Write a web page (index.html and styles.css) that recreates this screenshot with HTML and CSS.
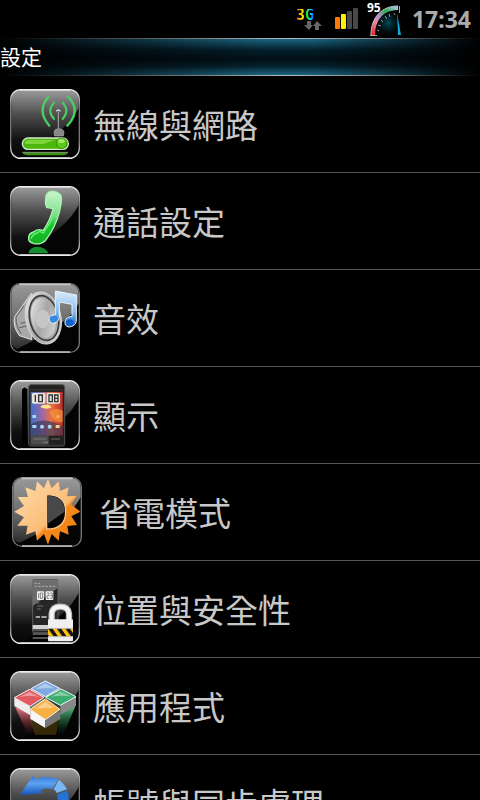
FILE: index.html
```html
<!DOCTYPE html>
<html lang="zh-Hant">
<head>
    <meta charset="UTF-8">
    <meta name="viewport" content="width=device-width, initial-scale=1.0">
    <title>設定</title>
    <link rel="stylesheet" href="styles.css">
</head>
<body>
    <!-- Shared gradients and the glossy tile -->
    <svg class="defs" width="0" height="0" aria-hidden="true">
        <defs>
            <linearGradient id="rim" x1="0" y1="0" x2="0" y2="1">
                <stop offset="0" stop-color="#f4f4f4"/>
                <stop offset=".25" stop-color="#777"/>
                <stop offset=".75" stop-color="#777"/>
                <stop offset="1" stop-color="#f0f0f0"/>
            </linearGradient>
            <linearGradient id="gloss" x1="0" y1="0" x2="0" y2="1">
                <stop offset="0" stop-color="#9a9a9a"/>
                <stop offset=".35" stop-color="#505050"/>
                <stop offset=".75" stop-color="#101010"/>
                <stop offset="1" stop-color="#060606"/>
            </linearGradient>
            <linearGradient id="gray" x1="0" y1="0" x2="0" y2="1">
                <stop offset="0" stop-color="#999"/>
                <stop offset=".5" stop-color="#707070"/>
                <stop offset="1" stop-color="#2c2c2c"/>
            </linearGradient>
            <linearGradient id="green" x1="0" y1="0" x2="0" y2="1">
                <stop offset="0" stop-color="#c9f5cf"/>
                <stop offset=".45" stop-color="#7ee08a"/>
                <stop offset=".65" stop-color="#14c828"/>
                <stop offset="1" stop-color="#12b020"/>
            </linearGradient>
            <linearGradient id="note" x1="0" y1="0" x2="0" y2="1">
                <stop offset="0" stop-color="#dceefc"/>
                <stop offset=".6" stop-color="#7db8ee"/>
                <stop offset="1" stop-color="#0f5fcb"/>
            </linearGradient>
            <linearGradient id="silver" x1="0" y1="0" x2="1" y2="1">
                <stop offset="0" stop-color="#f4f4f4"/>
                <stop offset=".5" stop-color="#a5a5a5"/>
                <stop offset="1" stop-color="#e0e0e0"/>
            </linearGradient>
            <linearGradient id="sun" x1="0" y1="0" x2="1" y2="1">
                <stop offset="0" stop-color="#ffdcae"/>
                <stop offset=".58" stop-color="#fbbd76"/>
                <stop offset=".62" stop-color="#f58a1c"/>
                <stop offset="1" stop-color="#f07d10"/>
            </linearGradient>
            <linearGradient id="screen" x1="0" y1="0" x2="1" y2="0">
                <stop offset="0" stop-color="#3c72c8"/>
                <stop offset=".35" stop-color="#9a68a8"/>
                <stop offset=".65" stop-color="#ec7040"/>
                <stop offset="1" stop-color="#c02c28"/>
            </linearGradient>
            <linearGradient id="arrow" x1="0" y1="0" x2="0" y2="1">
                <stop offset="0" stop-color="#2f78d8"/>
                <stop offset=".4" stop-color="#5ea2f0"/>
                <stop offset="1" stop-color="#1558bc"/>
            </linearGradient>
            <linearGradient id="dial" x1="0" y1="1" x2="1" y2="0">
                <stop offset="0" stop-color="#e8202c"/>
                <stop offset=".3" stop-color="#ee8c96"/>
                <stop offset=".45" stop-color="#c08ad0"/>
                <stop offset=".7" stop-color="#2cae48"/>
                <stop offset="1" stop-color="#a8c8ee"/>
            </linearGradient>
            <radialGradient id="dial-glow">
                <stop offset="0" stop-color="#004c5c"/>
                <stop offset="1" stop-color="#001216" stop-opacity="0"/>
            </radialGradient>
            <linearGradient id="fade-red" x1="0" y1="0" x2="0" y2="1">
                <stop offset="0" stop-color="#f08088"/>
                <stop offset="1" stop-color="#801018" stop-opacity="0"/>
            </linearGradient>
            <linearGradient id="fade-green" x1="0" y1="0" x2="0" y2="1">
                <stop offset="0" stop-color="#58c088"/>
                <stop offset="1" stop-color="#106030" stop-opacity="0"/>
            </linearGradient>
            <pattern id="hazard" width="26" height="26" patternUnits="userSpaceOnUse" patternTransform="skewX(35)">
                <rect width="26" height="26" fill="#151515"/>
                <rect width="13" height="26" fill="#fcc010"/>
            </pattern>
            <symbol id="tile" viewBox="0 0 210 210">
                <rect x="2" y="2" width="206" height="206" rx="30" fill="#040404"/>
                <path d="M4 33Q4 4 34 4H176Q206 4 206 33V56C175 120 105 158 36 204Q4 204 4 174Z" fill="url(#gloss)"/>
                <rect x="2" y="2" width="206" height="206" rx="30" fill="none" stroke="url(#rim)" stroke-width="4"/>
                <path d="M28 3H182M30 207H180" stroke="#e8e8e8" stroke-width="5"/>
            </symbol>
            <symbol id="tile-gray" viewBox="0 0 210 210">
                <rect x="2" y="2" width="206" height="206" rx="28" fill="#040404"/>
                <path d="M4 33Q4 4 34 4H176Q206 4 206 33V60C175 122 105 154 22 198Q4 192 4 174Z" fill="url(#gray)"/>
                <rect x="2" y="2" width="206" height="206" rx="28" fill="none" stroke="#777" stroke-width="4"/>
                <path d="M28 4H182M30 207H180" stroke="#c4c4c4" stroke-width="5"/>
            </symbol>
        </defs>
    </svg>

    <header class="status-bar">
        <div class="network">
            <span class="network-type">3G</span>
            <svg class="network-arrows" viewBox="0 0 18 9" aria-hidden="true">
                <path d="M3 0H7V4H9L5 9L0 4H3ZM11 9V5H9L13 0L18 5H15V9Z" fill="#666"/>
            </svg>
        </div>
        <svg class="signal" viewBox="0 0 24 22" aria-hidden="true">
            <rect x="0" y="9" width="5" height="12" rx="1" fill="#ff7800"/>
            <rect x="6" y="6" width="5" height="15" rx="1" fill="#fff000"/>
            <rect x="12" y="3" width="5" height="18" rx="1" fill="#484848"/>
            <rect x="18" y="0" width="5" height="21" rx="1" fill="#484848"/>
        </svg>
        <div class="battery">
            <svg class="battery-dial" viewBox="0 0 36 36" aria-hidden="true">
                <circle cx="21" cy="22" r="14" fill="url(#dial-glow)"/>
                <path d="M6 34C6 17 16 7 31 7" fill="none" stroke="url(#dial)" stroke-width="4"/>
                <path d="M4 34C4 16 15 5 31 5" fill="none" stroke="#b8c4dc" stroke-width="1"/>
                <path d="M3 34.500H10M32.500 5V12" stroke="#aaa"/>
                <path d="M10 29L12 30M11 24L14 25M14 19L16 21M18 15L20 18M22 13L23 16M27 12L28 14" stroke="#999"/>
                <path d="M30 12L34 34H31Z" fill="#10a8d4"/>
            </svg>
            <span class="battery-level">95</span>
        </div>
        <time class="clock">17:34</time>
    </header>

    <h1 class="title-bar">設定</h1>

    <nav class="settings">
        <a class="item" href="#wireless">
            <svg class="icon" viewBox="30 27 210 210" aria-hidden="true">
                <use href="#tile" x="30" y="27" width="210" height="210"/>
                <g fill="none" stroke="#48d060" stroke-linecap="round">
                    <path d="M162 68Q140 92 162 117M188 68Q210 92 188 117" stroke-width="6"/>
                    <path d="M145 51Q109 92 148 137M205 51Q245 92 202 137" stroke-width="7"/>
                </g>
                <path d="M169 94Q175 86 181 94" fill="none" stroke="#ddd" stroke-width="4"/>
                <path d="M175 96V146" stroke="#aaa" stroke-width="3"/>
                <path d="M162 156Q164 146 175 146Q190 146 192 156L190 168H164Z" fill="#888" stroke="#aaa" stroke-width="2"/>
                <rect x="67" y="174" width="138" height="34" rx="17" fill="#4cb80c" stroke="#d8e8d0" stroke-width="4"/>
                <path d="M82 180H165L130 192H75Q73 184 82 180Z" fill="#7dd43c"/>
                <circle cx="185" cy="190" r="16" fill="#58cc10" stroke="#2a7806" stroke-width="2"/>
                <ellipse cx="184" cy="183" rx="10" ry="6" fill="#a0e868"/>
                <path d="M67 217H204Q203 224 190 226H82Q69 224 67 217Z" fill="#3c9010"/>
                <path d="M67 217H204" stroke="#aaa" stroke-width="2"/>
            </svg>
            <span class="label">無線與網路</span>
        </a>
        <a class="item" href="#call">
            <svg class="icon" viewBox="30 24 210 210" aria-hidden="true">
                <use href="#tile" x="30" y="24" width="210" height="210"/>
                <path d="M86 226Q88 206 112 206Q136 206 145 226Z" fill="#18b03c" opacity=".8"/>
                <path d="M138 54Q141 42 154 40Q168 38 182 50Q187 63 183 78Q176 126 151 166Q141 181 136 188Q122 200 102 197Q84 192 86 180Q85 167 101 162Q111 151 130 157Q151 127 159 92L140 88Q134 75 138 54Z" fill="url(#green)" stroke="#a9f3b2" stroke-width="4"/>
                <path d="M93 182Q99 168 112 165L119 160L130 165Q151 137 163 106" fill="none" stroke="#6bec78" stroke-width="4"/>
            </svg>
            <span class="label">通話設定</span>
        </a>
        <a class="item" href="#sound">
            <svg class="icon" viewBox="30 24 210 210" aria-hidden="true">
                <use href="#tile-gray" x="30" y="24" width="210" height="210"/>
                <path d="M94 55L44 125Q37 153 58 182L95 194Z" fill="#a9a9a9" stroke="#ddd" stroke-width="3"/>
                <path d="M72 92L48 126Q47 154 64 177M62 145L78 141M58 158L80 153" fill="none" stroke="#5a5a5a" stroke-width="3"/>
                <ellipse cx="130" cy="129" rx="53" ry="79" transform="rotate(-12 130 129)" fill="url(#silver)" stroke="#d4d4d4" stroke-width="3"/>
                <ellipse cx="132" cy="129" rx="43" ry="68" transform="rotate(-12 132 129)" fill="#a9a9a9" stroke="#3c3c3c" stroke-width="5"/>
                <ellipse cx="130" cy="129" rx="36" ry="60" transform="rotate(-12 130 129)" fill="url(#silver)"/>
                <ellipse cx="128" cy="132" rx="21" ry="28" fill="#c6c6c6"/>
                <path d="M166 48L229 60V139Q226 154 207 156Q193 154 195 139Q199 125 216 124V88L178 81V130Q174 143 160 145Q146 143 148 130Q151 119 166 119Z" fill="url(#note)" stroke="#e6f3ff" stroke-width="3"/>
                <ellipse cx="161" cy="131" rx="12" ry="9" fill="#3888de"/>
                <ellipse cx="209" cy="142" rx="11" ry="9" fill="#1460cc"/>
            </svg>
            <span class="label">音效</span>
        </a>
        <a class="item" href="#display">
            <svg class="icon" viewBox="30 24 210 210" aria-hidden="true">
                <use href="#tile" x="30" y="24" width="210" height="210"/>
                <path d="M66 52Q74 40 82 52V215H66Z" fill="#000"/>
                <path d="M66 50L74 44L82 50" fill="none" stroke="#aaa" stroke-width="2"/>
                <rect x="86" y="38" width="108" height="184" rx="7" fill="#222" stroke="#555" stroke-width="3"/>
                <rect x="92" y="52" width="96" height="138" fill="url(#screen)"/>
                <path d="M92 52H188V60H92Z" fill="#282828"/>
                <path d="M92 156Q138 132 188 164V190H92Z" fill="#34385a" opacity=".65"/>
                <path d="M148 120Q170 104 188 116V150Q162 155 148 120Z" fill="#f39a38" opacity=".7"/>
                <rect x="96" y="63" width="40" height="32" rx="4" fill="#e4e4dc"/>
                <rect x="140" y="63" width="40" height="32" rx="4" fill="#e4e4dc"/>
                <path d="M106 69V89M116 69H127V89H116ZM147 69H157V89H147ZM164 69H174V89H164ZM164 79H174" fill="none" stroke="#333" stroke-width="4"/>
                <path d="M122 103Q130 96 137 99Q145 94 155 106Q140 114 122 106Z" fill="#ffe48a"/>
                <g fill="#a8d8f4">
                    <rect x="97" y="129" width="11" height="9"/>
                    <rect x="97" y="159" width="12" height="9"/>
                    <circle cx="126" cy="164" r="6"/>
                    <circle cx="149" cy="164" r="6"/>
                    <rect x="167" y="159" width="12" height="9" fill="#f8d080"/>
                    <rect x="169" y="130" width="10" height="8" fill="#f9a868"/>
                </g>
                <path d="M92 190H146V218H92Z" fill="#4e4e4e"/>
                <path d="M100 201H138M153 201H180M130 211H144" stroke="#999" stroke-width="2"/>
            </svg>
            <span class="label">顯示</span>
        </a>
        <a class="item item-wide" href="#power">
            <svg class="icon" viewBox="37 24 210 210" aria-hidden="true">
                <use href="#tile-gray" x="37" y="24" width="210" height="210"/>
                <path d="M145 30L156 58L177 37L181 66L207 55L202 82L232 80L214 106L242 128L215 142L232 168L203 171L207 197L181 187L177 215L156 195L145 227L133 195L112 215L107 187L79 197L84 170L53 170L73 145L44 128L73 111L54 84L85 84L77 55L107 66L112 37L133 58Z" fill="url(#sun)"/>
                <path d="M141 77Q198 77 198 128Q198 180 141 180Z" fill="#050505" stroke="#f9c68d" stroke-width="4"/>
                <path d="M144 80Q195 80 195 128L144 164Z" fill="#484848"/>
            </svg>
            <span class="label">省電模式</span>
        </a>
        <a class="item" href="#security">
            <svg class="icon" viewBox="30 24 210 210" aria-hidden="true">
                <use href="#tile" x="30" y="24" width="210" height="210"/>
                <rect x="98" y="40" width="76" height="160" rx="3" fill="#262626" stroke="#777" stroke-width="2"/>
                <path d="M98 42H174V66L98 120Z" fill="#6d6d6d"/>
                <path d="M103 61H169M103 52H120" stroke="#aaa" stroke-width="3" stroke-dasharray="8 3"/>
                <rect x="111" y="76" width="21" height="26" rx="2" fill="#f0f0f0"/>
                <rect x="137" y="76" width="23" height="26" rx="2" fill="#f0f0f0"/>
                <path d="M116 81V97M121 81H128V97H121ZM141 81H147V89H141V97H147M151 81H157V97H151M151 89H157" fill="none" stroke="#555" stroke-width="2"/>
                <path d="M111 111H118M111 120H130M111 129H122" stroke="#999" stroke-width="2"/>
                <path d="M107 153H120M124 153H140" stroke="#ccc" stroke-width="5"/>
                <rect x="98" y="177" width="50" height="16" fill="#d2d2d2"/>
                <path d="M98 192H148M98 204H148M98 216H148" stroke="#555" stroke-width="6"/>
                <path d="M155 166V143Q157 122 181 122Q205 122 207 143V166" fill="none" stroke="#bbb" stroke-width="19"/>
                <path d="M155 166V143Q157 122 181 122Q205 122 207 143V166" fill="none" stroke="#f5f5f5" stroke-width="12"/>
                <rect x="144" y="160" width="75" height="66" rx="3" fill="#f0f0f0"/>
                <rect x="144" y="188" width="75" height="23" fill="url(#hazard)"/>
                <path d="M144 187H219M144 212H219" stroke="#aaa" stroke-width="2"/>
            </svg>
            <span class="label">位置與安全性</span>
        </a>
        <a class="item" href="#apps">
            <svg class="icon" viewBox="30 24 210 210" aria-hidden="true">
                <use href="#tile" x="30" y="24" width="210" height="210"/>
                <path d="M45 131L91 151L103 215H84Z" fill="url(#fade-red)"/>
                <path d="M226 130L180 151L172 215H190Z" fill="url(#fade-green)"/>
                <path d="M91 170L135 194L180 160L168 215H105Z" fill="#7c6010" opacity=".4"/>
                <path d="M43 104L91 131V157L43 129Z" fill="#eee"/>
                <path d="M91 131L130 105V135L91 157Z" fill="#777"/>
                <path d="M228 101L181 126V155L228 129Z" fill="#888"/>
                <path d="M91 140L136 169V195L91 168Z" fill="#f6f6f6"/>
                <path d="M136 169L181 142V168L136 195Z" fill="#777"/>
                <path d="M136 54L179 76L136 101L93 77Z" fill="#7fa8e0" stroke="#f4f8ff" stroke-width="3"/>
                <path d="M89 79L132 103L90 130L43 104Z" fill="#e05860" stroke="#fff0f0" stroke-width="3"/>
                <path d="M183 78L228 101L181 127L137 103Z" fill="#3cac70" stroke="#e8fff0" stroke-width="3"/>
                <path d="M136 108L180 139L136 170L91 139Z" fill="#f8b040" stroke="#fff6dc" stroke-width="3"/>
                <path d="M136 61L162 76Q130 75 107 77ZM88 86L118 102Q86 96 58 103ZM182 85L212 100Q177 95 153 102ZM136 116L163 136Q132 131 104 139Z" fill="#fff" opacity=".4"/>
            </svg>
            <span class="label">應用程式</span>
        </a>
        <a class="item" href="#accounts">
            <svg class="icon" viewBox="30 84 210 210" aria-hidden="true">
                <use href="#tile" x="30" y="84" width="210" height="210"/>
                <path d="M60 164L98 108L107 118Q139 104 174 118L157 148Q137 140 122 150L127 160Z" fill="url(#arrow)"/>
                <path d="M177 119Q191 129 201 148L170 159Q168 152 161 148Z" fill="#78b8f4"/>
                <path d="M171 163L203 152Q212 184 195 216L166 202Q176 180 171 163Z" fill="#2474d8"/>
                <path d="M210 224L172 280L163 270Q120 280 96 268L113 240Q133 248 148 238L143 228Z" fill="url(#arrow)"/>
            </svg>
            <span class="label">帳號與同步處理</span>
        </a>
    </nav>
</body>
</html>
```

FILE: styles.css
```css
* {
    box-sizing: border-box;
}

body {
    display: flex;
    flex-direction: column;
    height: 100vh;
    margin: 0;
    background: #000;
    color: #c8c8c8;
    font-family: "Noto Sans", "Noto Sans CJK TC", sans-serif;
}

.defs {
    position: absolute;
}

/* Status bar */
.status-bar {
    display: flex;
    flex: none;
    align-items: center;
    justify-content: flex-end;
    height: 38px;
    padding-right: 9px;
}

.network {
    display: flex;
    flex-direction: column;
    width: 26px;
    margin-right: 13px;
}

.network-type {
    align-self: flex-start;
    font: bold 15px/12px "DejaVu Sans Mono", monospace;
    color: transparent;
    background: linear-gradient(to right, #ff3c00, #ffe800 35%, #20e020 60%, #00d8ff 80%, #2040ff);
    -webkit-background-clip: text;
    background-clip: text;
}

.network-arrows {
    align-self: flex-end;
    width: 18px;
    height: 9px;
}

.signal {
    width: 24px;
    height: 22px;
    margin-right: 8px;
}

.battery {
    position: relative;
    width: 36px;
    height: 36px;
    margin-right: 9px;
}

.battery-dial {
    display: block;
    width: 36px;
    height: 36px;
}

.battery-level {
    position: absolute;
    top: 0;
    left: 0;
    font-size: 12px;
    line-height: 14px;
    font-weight: bold;
    color: #fff;
}

.clock {
    font-size: 23px;
    line-height: 36px;
    font-weight: bold;
    color: #aaa;
}

/* Title bar */
.title-bar {
    flex: none;
    height: 38px;
    margin: 0;
    border-top: 1px solid;
    border-bottom: 1px solid;
    border-image: linear-gradient(to right, #000, #888 45%, #bbb 60%, #777 80%, #000) 1;
    background:
        linear-gradient(to right, #000, transparent 55%, transparent 65%, #000),
        linear-gradient(to bottom, #1b6580, #04202c 30%, #020f16 55%, #04202c 75%, #1b6580);
    color: #fff;
    font-size: 21px;
    line-height: 36px;
    font-weight: normal;
}

/* Settings list */
.settings {
    flex: 1;
    min-height: 0;
    overflow-y: auto;
    scrollbar-width: none;
}

.item {
    display: flex;
    align-items: center;
    gap: 13px;
    height: 97px;
    padding-left: 10px;
    border-bottom: 1px solid #555;
    color: inherit;
    text-decoration: none;
}

.item-wide {
    gap: 17px;
    padding-left: 12px;
}

.icon {
    flex: none;
    width: 70px;
    height: 70px;
}

.label {
    padding-top: 4px;
    font-size: 33px;
    line-height: 48px;
    white-space: nowrap;
}
```
